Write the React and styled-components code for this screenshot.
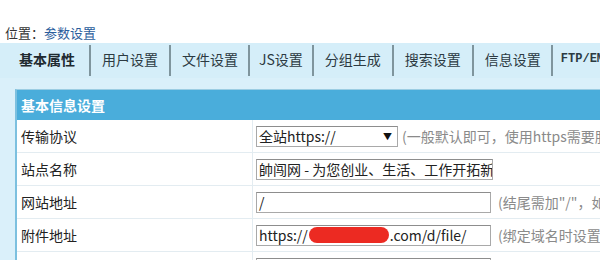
import React from 'react'
import styled, { createGlobalStyle } from 'styled-components'

const Global = createGlobalStyle`
  html, body {
    margin: 0;
    padding: 0;
    background: #fff;
    overflow: hidden;
  }
  body {
    font-family: "Noto Sans CJK SC", "Noto Sans", sans-serif;
    font-size: 14px;
    color: #222;
  }
`;

const Page = styled.div`
  width: 600px;
  height: 260px;
  overflow: hidden;
`;

const Crumb = styled.div`
  height: 43px;
  display: flex;
  align-items: flex-end;
  padding-left: 5px;
  font-size: 13px;
  line-height: 20px;
  color: #333;
  box-sizing: border-box;
`;

const CrumbLink = styled.span`
  color: #2b5d9c;
`;

const Main = styled.div`
  background: #daf0fa;
  height: 217px;
  padding-left: 15px;
  box-sizing: border-box;
`;

const TabBar = styled.div`
  display: flex;
  height: 35px;
  align-items: center;
  background: #d5eef9;
  margin-left: -15px;
  padding-left: 15px;
  white-space: nowrap;
`;

const Tab = styled.div`
  height: 31px;
  box-sizing: border-box;
  padding-bottom: 3px;
  display: flex;
  align-items: center;
  padding-left: ${({ $pl }) => $pl ?? 11}px;
  padding-right: ${({ $pr }) => $pr ?? 11}px;
  font-size: ${({ $mono }) => ($mono ? 12 : 14)}px;
  font-weight: ${({ $active, $mono }) => ($active || $mono ? 700 : 400)};
  color: ${({ $active }) => ($active ? '#1f2a30' : '#2c3a42')};
  border-right: 2px solid #7f959d;
  font-family: ${({ $mono }) =>
    $mono ? '"Liberation Mono", monospace' : '"Noto Sans CJK SC", sans-serif'};
  &:last-child {
    border-right: none;
  }
`;

const Gap = styled.div`
  height: 11px;
`;

const Panel = styled.div`
  background: #fff;
  border-top: 1px solid #9ccde3;
  border-left: 2px solid #7cc0df;
  height: 171px;
  overflow: hidden;
`;

const Header = styled.div`
  height: 30px;
  background: #4aaddb;
  color: #fff;
  font-weight: 700;
  font-size: 14px;
  display: flex;
  align-items: center;
  padding-left: 4px;
`;

const Row = styled.div`
  display: grid;
  grid-template-columns: 236px 1fr;
  height: 32px;
  border-bottom: 1px solid #e3ecf1;
`;

const Label = styled.div`
  display: flex;
  align-items: center;
  padding-left: 4px;
  border-right: 1px solid #e3ecf1;
  font-size: 14px;
  color: #222;
`;

const Value = styled.div`
  display: flex;
  align-items: center;
  padding-left: 3px;
  white-space: nowrap;
  overflow: hidden;
`;

const Field = styled.div`
  width: ${({ $w }) => $w}px;
  height: 21px;
  box-sizing: border-box;
  border: 1px solid #a9a9a9;
  border-top-color: #8d8d8d;
  display: flex;
  align-items: center;
  padding-left: 2px;
  font-size: 14px;
  color: #222;
  overflow: hidden;
  white-space: nowrap;
  flex-shrink: 0;
  background: #fff;
`;

const Select = styled(Field)`
  justify-content: space-between;
  padding-right: 5px;
`;

const Arrow = styled.span`
  font-size: 9px;
  color: #111;
`;

const Note = styled.span`
  margin-left: ${({ $m }) => $m || 4}px;
  color: #8a8a8a;
  font-size: 14px;
`;

const Censor = styled.span`
  display: inline-block;
  width: 80px;
  height: 16px;
  border-radius: 8px;
  background: #ec2a22;
  margin: 0 1px;
`;

const tabs = [
  { name: '基本属性', active: true, pl: 4, pr: 14 },
  { name: '用户设置' },
  { name: '文件设置', pl: 11, pr: 10 },
  { name: 'JS设置', pl: 9, pr: 9 },
  { name: '分组生成' },
  { name: '搜索设置' },
  { name: '信息设置', pl: 11, pr: 10 },
  { name: 'FTP/EMAIL', mono: true, pl: 8 },
];

export default function App() {
  return (
    <Page>
      <Global />
      <Crumb>
        位置：<CrumbLink>参数设置</CrumbLink>
      </Crumb>
      <Main>
        <TabBar>
          {tabs.map((t) => (
            <Tab
              key={t.name}
              $active={t.active}
              $pl={t.pl}
              $pr={t.pr}
              $mono={t.mono}
            >
              {t.name}
            </Tab>
          ))}
        </TabBar>
        <Gap />
        <Panel>
          <Header>基本信息设置</Header>
          <Row>
            <Label>传输协议</Label>
            <Value>
              <Select $w={142}>
                全站https://
                <Arrow>▼</Arrow>
              </Select>
              <Note>(一般默认即可，使用https需要服务器支持)</Note>
            </Value>
          </Row>
          <Row>
            <Label>站点名称</Label>
            <Value>
              <Field $w={237}>帥闯网 - 为您创业、生活、工作开拓新视野</Field>
            </Value>
          </Row>
          <Row>
            <Label>网站地址</Label>
            <Value>
              <Field $w={235}>/</Field>
              <Note $m={7}>(结尾需加"/"，如：/)</Note>
            </Value>
          </Row>
          <Row>
            <Label>附件地址</Label>
            <Value>
              <Field $w={235}>
                https://<Censor />.com/d/file/
              </Field>
              <Note $m={7}>(绑定域名时设置，如无需要请留空)</Note>
            </Value>
          </Row>
          <Row>
            <Label></Label>
            <Value>
              <Field $w={235}></Field>
            </Value>
          </Row>
        </Panel>
      </Main>
    </Page>
  )
}
